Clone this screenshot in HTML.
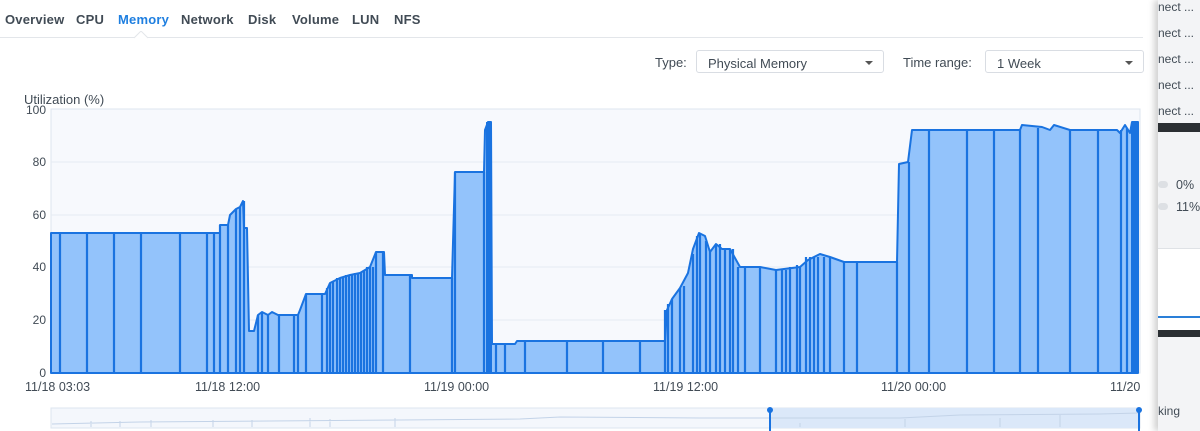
<!DOCTYPE html>
<html><head><meta charset="utf-8"><style>
body{margin:0;width:1200px;height:431px;overflow:hidden;background:#fff;font-family:"Liberation Sans",sans-serif;position:relative}
.tabs{position:absolute;left:0;top:0;width:1143px;height:37px;border-bottom:1px solid #e3e6ea}
.tab{position:absolute;top:12px;font-size:13px;font-weight:bold;color:#414b55;letter-spacing:0.2px}
.lbl{position:absolute;font-size:13px;color:#414b55}
.sel{position:absolute;height:23px;border:1px solid #d9dde3;border-radius:3px;font-size:13px;color:#414b55;box-sizing:border-box;padding:5px 11px}
.sel:after{content:"";position:absolute;right:10px;top:10px;border-left:4px solid transparent;border-right:4px solid transparent;border-top:4px solid #555}
.side{position:absolute;left:1158px;top:0;width:42px;height:431px;background:#f3f4f6;box-shadow:-4px 0 6px rgba(0,0,0,.18)}
.side div{position:absolute;font-size:12px;color:#414b55}
</style></head><body>
<div class="tabs">
<span class="tab" style="left:5px">Overview</span>
<span class="tab" style="left:76px">CPU</span>
<span class="tab" style="left:118px;color:#1f7fe0">Memory</span>
<span class="tab" style="left:181px">Network</span>
<span class="tab" style="left:248px">Disk</span>
<span class="tab" style="left:292px">Volume</span>
<span class="tab" style="left:352px">LUN</span>
<span class="tab" style="left:394px">NFS</span>
</div>
<svg style="position:absolute;left:134px;top:31px" width="14" height="8"><path d="M0 7 L7 0 L14 7" fill="#fff" stroke="#e3e6ea"/></svg>
<span class="lbl" style="left:655px;top:55px">Type:</span>
<div class="sel" style="left:696px;top:50px;width:188px">Physical Memory</div>
<span class="lbl" style="left:903px;top:55px">Time range:</span>
<div class="sel" style="left:985px;top:50px;width:159px">1 Week</div>

<svg style="position:absolute;left:0;top:0" width="1160" height="431" font-family="Liberation Sans" font-size="12" fill="#414b55">
<text x="24" y="104" font-size="13">Utilization (%)</text>
<g text-anchor="end" font-size="12"><text x="46" y="114">100</text><text x="46" y="166">80</text><text x="46" y="219">60</text><text x="46" y="271">40</text><text x="46" y="324">20</text><text x="46" y="377">0</text></g>
<rect x="51" y="109" width="1089" height="264" fill="#f7f9fd" stroke="#dde5ef"/>
<g stroke="#e6ebf2"><line x1="51" x2="1140" y1="162" y2="162"/><line x1="51" x2="1140" y1="215" y2="215"/><line x1="51" x2="1140" y1="267" y2="267"/><line x1="51" x2="1140" y1="320" y2="320"/></g>
<path fill="#93c3fb" stroke="#1a73e0" stroke-width="2" stroke-linejoin="round" d="M51 373 L51 233 L220 233 L220 225 L228 225 L230 215 L236 209 L240 207 L243 201 L244 228 L247 228 L249 331 L254 331 L258 315 L262 312 L268 315 L272 312 L278 315 L298 315 L300 310 L306 294 L325 294 L330 283 L340 278 L350 275 L360 273 L370 267 L376 252 L384 252 L385 275 L412 275 L412 278 L452 278 L455 172 L484 172 L485 130 L488 122 L491 122 L492 344 L515 344 L517 341 L665 341 L667 310 L672 299 L680 288 L688 273 L693 249 L699 233 L705 236 L710 252 L716 244 L722 249 L730 249 L740 267 L760 267 L776 270 L800 267 L808 260 L820 254 L830 257 L844 262 L897 262 L899 164 L908 162 L912 130 L914 130 L1020 130 L1022 125 L1042 127 L1050 130 L1054 125 L1070 130 L1117 130 L1120 133 L1125 125 L1130 133 L1132 122 L1138 122 L1138 233 L1138 373 Z"/>
<path stroke="#1a73e0" stroke-width="2.2" fill="none" d="M60 233V373M87 233V373M114 233V373M141 233V373M180 233V373M207 233V373M214 233V373M220 225V373M228 225V373M236 209V373M240 207V373M244 201V373M258 315V373M262 312V373M268 315V373M279 315V373M294 315V373M298 315V373M306 294V373M322 294V373M327 288V373M330 283V373M333 281V373M337 278V373M340 278V373M343 278V373M346 275V373M349 275V373M352 275V373M355 273V373M358 273V373M361 273V373M364 270V373M367 267V373M370 267V373M373 267V373M376 252V373M383 252V373M410 275V373M452 278V373M455 172V373M484 172V373M496 344V373M505 344V373M525 341V373M567 341V373M603 341V373M640 341V373M665 310V373M668 304V373M672 299V373M680 288V373M684 286V373M693 254V373M697 236V373M700 233V373M706 241V373M710 252V373M716 244V373M720 244V373M725 249V373M730 249V373M733 249V373M738 267V373M745 267V373M760 267V373M776 270V373M782 270V373M786 270V373M790 267V373M797 265V373M800 267V373M806 257V373M810 257V373M814 257V373M818 257V373M824 257V373M830 257V373M844 262V373M857 262V373M897 262V373M909 162V373M929 130V373M967 130V373M994 130V373M1020 130V373M1038 128V373M1070 130V373M1098 130V373M1121 130V373M1127 128V373"/>
<rect x="486" y="122" width="6" height="251" fill="#1a73e0"/>
<rect x="1131" y="122" width="7" height="251" fill="#1a73e0"/>
<g font-size="12.5"><text x="25" y="391">11/18 03:03</text><text x="195" y="391">11/18 12:00</text><text x="424" y="391">11/19 00:00</text><text x="653" y="391">11/19 12:00</text><text x="881" y="391">11/20 00:00</text><text x="1110" y="391">11/20</text></g>
<rect x="51" y="408" width="1089" height="20" fill="#f4f7fc" stroke="#dde5ef"/>
<rect x="770" y="408" width="369" height="20" fill="#dbe8f9"/>
<path fill="none" stroke="#c3d3e8" d="M52 424 L140 422 L270 421 L400 420 L520 419 L560 417 L700 418 L900 418 L960 415 L1100 414 L1139 413 M91 421V427M120 421V427M151 420V427M213 420V427M252 420V427M310 418V427M330 419V427M395 418V427M770 417V427M800 423V427M905 419V427M1000 418V427M1060 415V427"/>
<line x1="770" y1="410" x2="770" y2="431" stroke="#1a73e0" stroke-width="2"/>
<line x1="1139" y1="410" x2="1139" y2="431" stroke="#1a73e0" stroke-width="2"/>
<circle cx="770" cy="410" r="3" fill="#1a73e0"/><circle cx="1139" cy="410" r="3" fill="#1a73e0"/>
</svg>

<div class="side">
<div style="left:0;top:0">nect ...</div>
<div style="left:0;top:26px">nect ...</div>
<div style="left:0;top:52px">nect ...</div>
<div style="left:0;top:78px">nect ...</div>
<div style="left:0;top:104px">nect ...</div>
<div style="left:0;top:123px;width:42px;height:9px;background:#2b2f33"></div>
<div style="left:0;top:181px;width:10px;height:7px;border-radius:4px;background:#dde0e4"></div>
<div style="left:18px;top:178px;font-size:12.5px">0%</div>
<div style="left:0;top:203px;width:10px;height:7px;border-radius:4px;background:#dde0e4"></div>
<div style="left:18px;top:200px;font-size:12.5px">11%</div>
<div style="left:0;top:248px;width:42px;height:82px;background:#fff;border-top:1px solid #dfe2e6"></div>
<div style="left:0;top:316px;width:42px;height:2px;background:#2a7fd8"></div>
<div style="left:0;top:330px;width:42px;height:7px;background:#2b2f33"></div>
<div style="left:0;top:404px">king</div>
</div>
</body></html>
